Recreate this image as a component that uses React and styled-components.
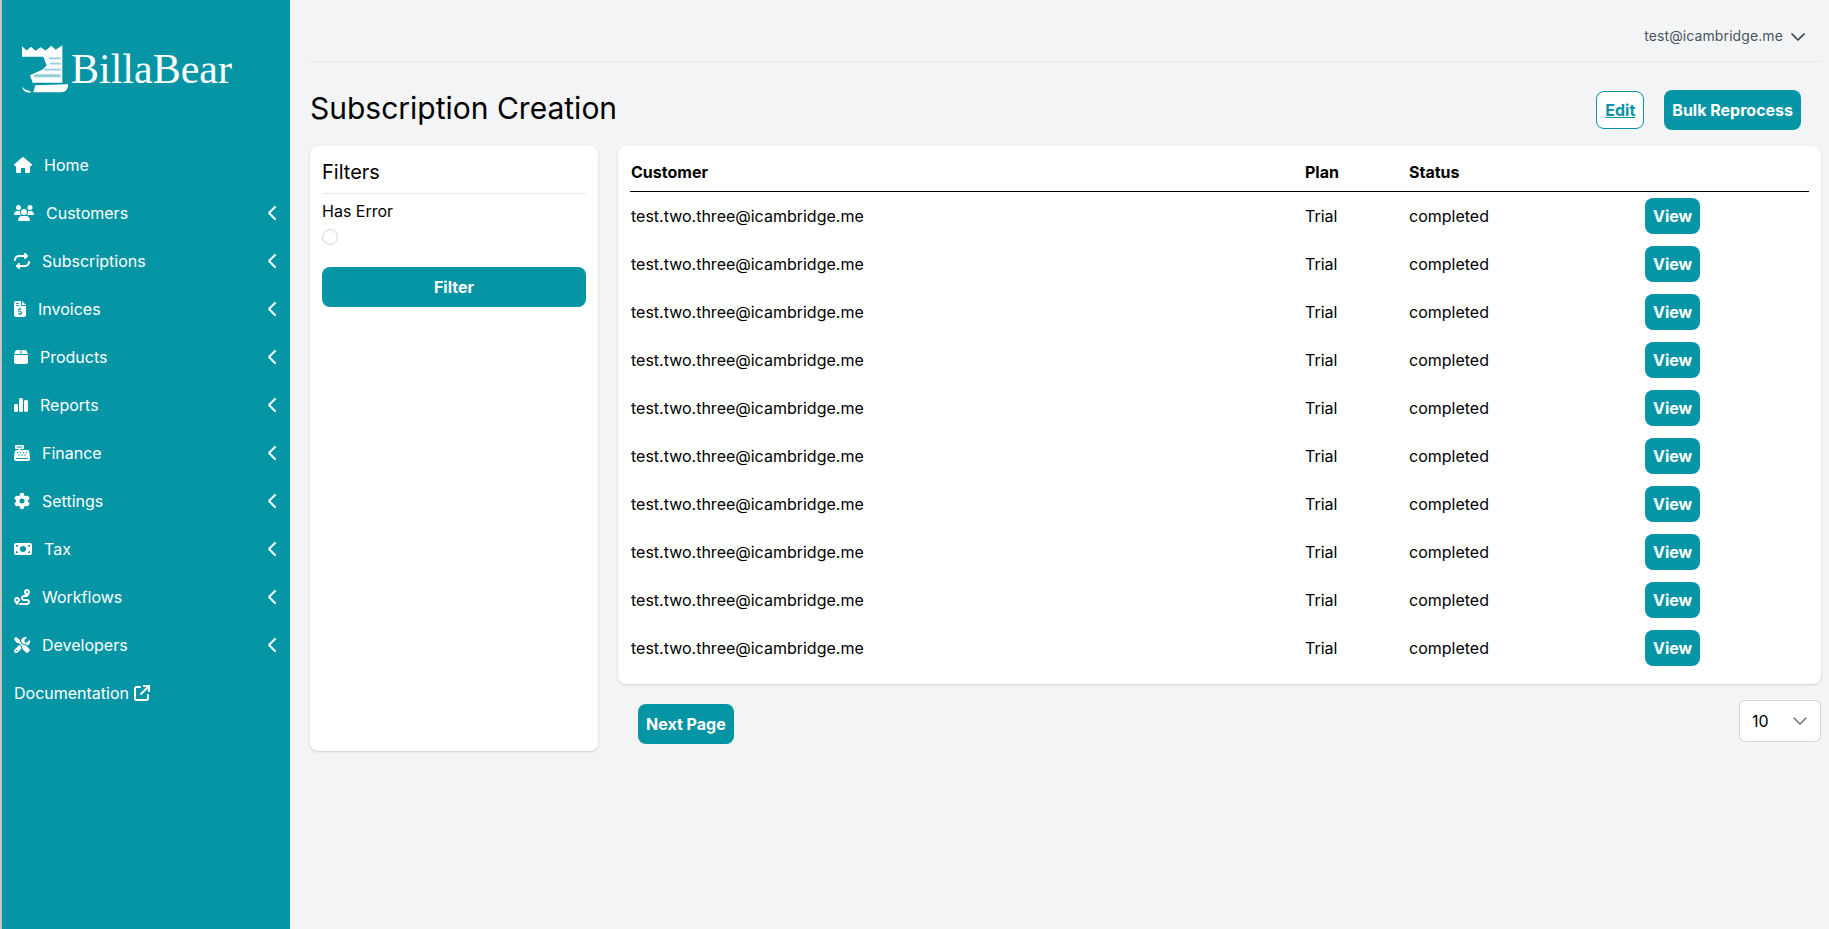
import styled, { createGlobalStyle } from "styled-components";
import {
  FaHouse,
  FaUsers,
  FaRepeat,
  FaFileInvoiceDollar,
  FaBox,
  FaChartSimple,
  FaCashRegister,
  FaGear,
  FaMoneyBill,
  FaRoute,
  FaScrewdriverWrench,
  FaChevronLeft,
  FaArrowUpRightFromSquare,
} from "react-icons/fa6";
import { ChevronDown } from "lucide-react";

const teal = "#0695a5";

const GlobalStyle = createGlobalStyle`
  html, body {
    margin: 0;
    padding: 0;
    background: #f3f4f6;
    font-family: Inter, "Liberation Sans", sans-serif;
    color: #000;
  }
  * { box-sizing: border-box; }
`;

const Page = styled.div`
  display: flex;
  min-height: 100vh;
  background: #f3f4f6;
  border-left: 2px solid #c6c7c1;
`;

const Sidebar = styled.aside`
  width: 288px;
  flex-shrink: 0;
  background: ${teal};
  color: #fff;
`;

const Logo = styled.div`
  display: flex;
  align-items: flex-start;
  gap: 3px;
  height: 141px;
  padding: 45px 0 0 20px;
`;

const LogoText = styled.span`
  font-family: "Liberation Serif", serif;
  font-size: 42px;
  line-height: 48px;
`;

const Menu = styled.nav`
  display: flex;
  flex-direction: column;
`;

const MenuItem = styled.div`
  display: flex;
  align-items: center;
  gap: 12px;
  height: 48px;
  padding: 0 12px;
  font-size: 16px;
`;

const MenuIcon = styled.span`
  display: flex;
  align-items: center;
  flex-shrink: 0;
  width: ${(p) => p.$w}px;

  svg {
    display: block;
    width: ${(p) => p.$w}px;
    height: 16px;
  }
`;

const MenuLabel = styled.span`
  flex: 1;
`;

const DocLink = styled.div`
  display: flex;
  align-items: center;
  gap: 5px;
  height: 48px;
  padding-left: 12px;
  font-size: 16px;
`;

const Main = styled.main`
  flex: 1;
  padding: 0 8px 0 20px;
`;

const TopBar = styled.header`
  display: flex;
  justify-content: flex-end;
  align-items: center;
  gap: 3px;
  height: 62px;
  padding: 9px 11px 0 0;
  border-bottom: 1px solid #e5e7eb;
  color: #4b5563;
  font-size: 14px;
  letter-spacing: 0.1px;
`;

const UserChevron = styled(ChevronDown)`
  margin-top: 3px;
  color: #374151;
`;

const TitleRow = styled.div`
  display: flex;
  align-items: center;
  justify-content: space-between;
  height: 84px;
  padding: 12px 20px 0 0;
`;

const Title = styled.h1`
  margin: 0;
  padding-bottom: 4px;
  font-size: 30px;
  font-weight: 400;
`;

const Actions = styled.div`
  display: flex;
  align-items: center;
  gap: 20px;
`;

const Button = styled.button`
  border: 0;
  border-radius: 8px;
  background: ${teal};
  color: #fff;
  font-family: inherit;
  font-size: 16px;
  font-weight: 700;
  padding: 0 8px;
  height: ${(p) => p.$h || 40}px;
  margin-top: ${(p) => p.$top || 0}px;
  width: ${(p) => (p.$full ? "100%" : "auto")};
`;

const EditButton = styled.button`
  height: 38px;
  padding: 0 8px;
  border: 1px solid ${teal};
  border-radius: 8px;
  background: #fff;
  color: ${teal};
  font-family: inherit;
  font-size: 16px;
  font-weight: 700;
  text-decoration: underline;
`;

const Columns = styled.div`
  display: flex;
  align-items: flex-start;
  gap: 20px;
`;

const Card = styled.section`
  background: #fff;
  border-radius: 8px;
  box-shadow: 0 1px 3px rgba(0, 0, 0, 0.1), 0 1px 2px rgba(0, 0, 0, 0.06);
`;

const FilterCard = styled(Card)`
  width: 288px;
  height: 605px;
  padding: 12px;
`;

const FilterTitle = styled.h2`
  margin: 0;
  height: 36px;
  font-size: 20px;
  line-height: 28px;
  font-weight: 400;
  border-bottom: 1px solid #e5e7eb;
`;

const FilterLabel = styled.div`
  margin-top: 5px;
  font-size: 16px;
  line-height: 24px;
`;

const Radio = styled.span`
  display: block;
  width: 16px;
  height: 16px;
  margin: 6px 0 22px;
  border: 1px solid #d1d5db;
  border-radius: 50%;
  background: #fff;
`;

const Right = styled.div`
  flex: 1;
`;

const TableCard = styled(Card)`
  height: 538px;
  padding: 0 12px;
`;

const Table = styled.table`
  width: 100%;
  border-collapse: separate;
  border-spacing: 0;
  table-layout: fixed;
  font-size: 16px;
`;

const Head = styled.th`
  height: 46px;
  text-align: left;
  font-weight: 700;
  padding: 6px 0 0 1px;
  border-bottom: 1px solid #000;
  width: ${(p) => p.$w}px;
`;

const Cell = styled.td`
  height: 48px;
  padding: 0 0 0 1px;
`;

const Pager = styled.div`
  display: flex;
  align-items: flex-start;
  justify-content: space-between;
  padding: 16px 0 0 20px;
`;

const SelectBox = styled.div`
  display: flex;
  align-items: center;
  justify-content: space-between;
  width: 82px;
  height: 42px;
  padding: 0 8px 0 12px;
  background: #fff;
  border: 1px solid #d1d5db;
  border-radius: 6px;
  font-size: 16px;
  color: #6b7280;
`;

const SelectValue = styled.span`
  color: #000;
`;

const Mark = () => (
  <svg width="46" height="48" viewBox="0 0 138 143" fill="#fff">
    <path d="M0 3 L14 16 L27 5 L41 17 L56 6 L71 16 L88 2 L101 14 L121 0 L121 113 L32 113 L24 90 L62 73 L74 60 L64 35 L0 35 Z" />
    <path d="M40 120 L138 117 L138 124 Q134 141 118 141 L34 141 Z" />
    <path d="M0 124 Q8 136 26 138 L25 143 Q2 142 0 124 Z" />
    <path
      d="M80 37 H116 V42 H80 Z M84 53 H116 V58 H84 Z M66 71 H116 V76 H66 Z M36 87 H116 V96 H36 Z"
      fill="#8fd0d8"
    />
  </svg>
);

const items = [
  { label: "Customers", icon: FaUsers, width: 20 },
  { label: "Subscriptions", icon: FaRepeat, width: 16 },
  { label: "Invoices", icon: FaFileInvoiceDollar, width: 12 },
  { label: "Products", icon: FaBox, width: 14 },
  { label: "Reports", icon: FaChartSimple, width: 14 },
  { label: "Finance", icon: FaCashRegister, width: 16 },
  { label: "Settings", icon: FaGear, width: 16 },
  { label: "Tax", icon: FaMoneyBill, width: 18 },
  { label: "Workflows", icon: FaRoute, width: 16 },
  { label: "Developers", icon: FaScrewdriverWrench, width: 16 },
];

const rows = Array.from({ length: 10 }, (_, i) => i);

const App = () => {
  return (
    <>
      <GlobalStyle />
      <Page>
        <Sidebar>
          <Logo>
            <Mark />
            <LogoText>BillaBear</LogoText>
          </Logo>
          <Menu>
            <MenuItem>
              <MenuIcon $w={18}>
                <FaHouse />
              </MenuIcon>
              <MenuLabel>Home</MenuLabel>
            </MenuItem>
            {items.map((item) => {
              const Icon = item.icon;
              return (
                <MenuItem key={item.label}>
                  <MenuIcon $w={item.width}>
                    <Icon />
                  </MenuIcon>
                  <MenuLabel>{item.label}</MenuLabel>
                  <MenuIcon $w={10}>
                    <FaChevronLeft />
                  </MenuIcon>
                </MenuItem>
              );
            })}
            <DocLink>
              Documentation
              <FaArrowUpRightFromSquare size={16} />
            </DocLink>
          </Menu>
        </Sidebar>
        <Main>
          <TopBar>
            test@icambridge.me
            <UserChevron size={24} strokeWidth={1.75} />
          </TopBar>
          <TitleRow>
            <Title>Subscription Creation</Title>
            <Actions>
              <EditButton>Edit</EditButton>
              <Button>Bulk Reprocess</Button>
            </Actions>
          </TitleRow>
          <Columns>
            <FilterCard>
              <FilterTitle>Filters</FilterTitle>
              <FilterLabel>Has Error</FilterLabel>
              <Radio />
              <Button $full>Filter</Button>
            </FilterCard>
            <Right>
              <TableCard>
                <Table>
                  <thead>
                    <tr>
                      <Head $w={674}>Customer</Head>
                      <Head $w={104}>Plan</Head>
                      <Head $w={236}>Status</Head>
                      <Head />
                    </tr>
                  </thead>
                  <tbody>
                    {rows.map((i) => (
                      <tr key={i}>
                        <Cell>test.two.three@icambridge.me</Cell>
                        <Cell>Trial</Cell>
                        <Cell>completed</Cell>
                        <Cell>
                          <Button $h={36}>View</Button>
                        </Cell>
                      </tr>
                    ))}
                  </tbody>
                </Table>
              </TableCard>
              <Pager>
                <Button $top={4}>Next Page</Button>
                <SelectBox>
                  <SelectValue>10</SelectValue>
                  <ChevronDown size={24} strokeWidth={1.5} />
                </SelectBox>
              </Pager>
            </Right>
          </Columns>
        </Main>
      </Page>
    </>
  );
};

export default App;
